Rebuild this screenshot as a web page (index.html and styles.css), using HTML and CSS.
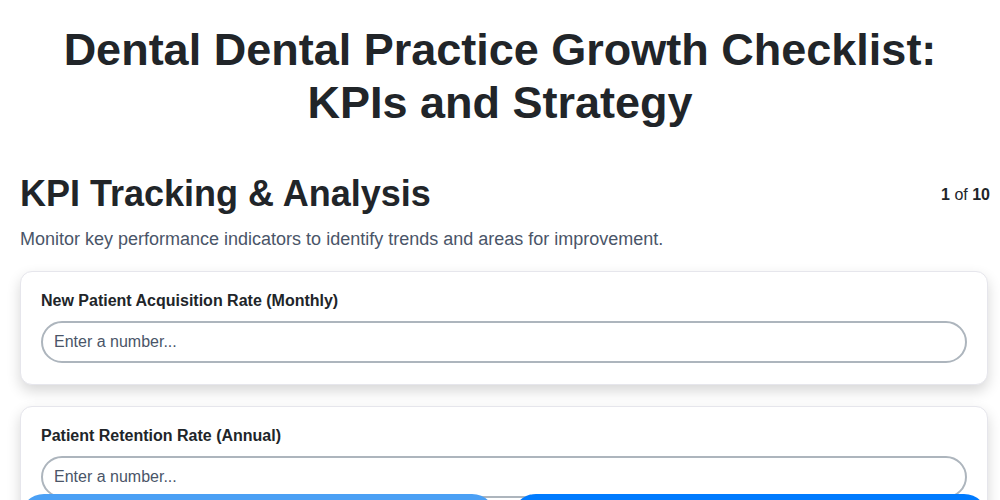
FILE: index.html
```html
<!DOCTYPE html>
<html lang="en">
<head>
<meta charset="utf-8">
<title>Dental Practice Growth Checklist</title>
<link rel="stylesheet" href="styles.css">
</head>
<body>
<div class="page">
  <h1 class="title">Dental Dental Practice Growth Checklist: KPIs and Strategy</h1>
  <section class="step">
    <div class="step-head">
      <h2 class="step-title">KPI Tracking &amp; Analysis</h2>
      <div class="step-count"><b>1</b> of <b>10</b></div>
    </div>
    <p class="step-desc">Monitor key performance indicators to identify trends and areas for improvement.</p>
    <div class="cards">
      <div class="card">
        <label class="card-label">New Patient Acquisition Rate (Monthly)</label>
        <input class="field" type="text" placeholder="Enter a number...">
      </div>
      <div class="card">
        <label class="card-label">Patient Retention Rate (Annual)</label>
        <input class="field" type="text" placeholder="Enter a number...">
      </div>
    </div>
  </section>
</div>
<nav class="nav">
  <button class="btn btn-prev"><span class="btn-text">Previous</span></button>
  <button class="btn btn-next"><span class="btn-text">Next</span></button>
</nav>
</body>
</html>
```
FILE: styles.css
```css
* { box-sizing: border-box; }
html, body { margin: 0; padding: 0; background: #fff; overflow: hidden; }
body {
  font-family: "Liberation Sans", Arial, sans-serif;
  color: #212529;
  height: 500px;
}
.page { padding: 0 10px 0 20px; }
.title {
  margin: 0;
  padding-top: 23px;
  padding-right: 10px;
  font-size: 45px;
  line-height: 53px;
  font-weight: 700;
  text-align: center;
  color: #212529;
}
.step { margin-top: 43px; }
.step-head {
  display: flex;
  justify-content: space-between;
  align-items: flex-start;
}
.step-title {
  margin: 0;
  font-size: 36px;
  line-height: 44px;
  font-weight: 700;
  color: #212529;
}
.step-count {
  font-size: 16px;
  line-height: 20px;
  padding-top: 13px;
  color: #212529;
}
.step-count b { font-weight: 700; }
.step-desc {
  margin: 11px 0 0;
  font-size: 18px;
  line-height: 24px;
  color: #4a5568;
}
.cards {
  display: flex;
  flex-direction: column;
  gap: 21px;
  margin-top: 20px;
  margin-right: 2px;
}
.card {
  background: #fff;
  border: 1px solid #e6e6ec;
  border-radius: 12px;
  padding: 19px 20px 21px;
  box-shadow: 0 6px 14px rgba(0, 0, 0, 0.16);
  display: flex;
  flex-direction: column;
}
.card-label {
  font-size: 16px;
  line-height: 20px;
  font-weight: 700;
  color: #212529;
  margin-bottom: 10px;
}
.field {
  height: 42px;
  border: 2px solid #adb5bd;
  border-radius: 21px;
  padding: 0 11px;
  font-family: "Liberation Sans", Arial, sans-serif;
  font-size: 16px;
  color: #212529;
  background: #fff;
  outline: none;
}
.field::placeholder { color: #4a5568; opacity: 1; }
.nav {
  position: fixed;
  left: 20px;
  right: 12px;
  top: 494px;
  display: flex;
  gap: 16px;
}
.btn {
  flex: 1;
  height: 48px;
  border: none;
  border-radius: 24px;
  color: #fff;
  font-family: "Liberation Sans", Arial, sans-serif;
  font-size: 16px;
  font-weight: 700;
  display: flex;
  align-items: flex-end;
  justify-content: center;
  padding: 0 0 8px;
}
.btn-prev { background: #4ba0f5; }
.btn-next { background: #007bff; }
```
